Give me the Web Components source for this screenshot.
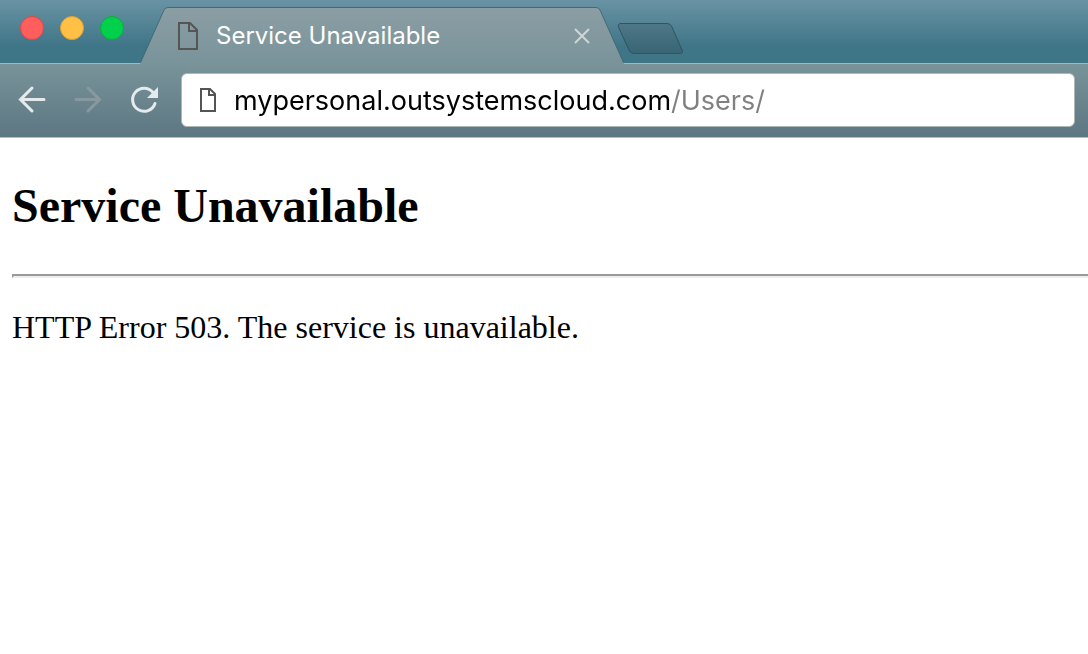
<!DOCTYPE html>
<html lang="en">
<head>
<meta charset="utf-8">
<title>Service Unavailable</title>
<style>
  html, body { margin: 0; min-height: 100%; background: #fff; }
  body { font-family: Inter, Roboto, sans-serif; overflow-x: hidden; }
</style>
</head>
<body>
<browser-window>
  <tab-strip slot="tabs">
    <window-controls slot="controls"></window-controls>
    <browser-tab>Service Unavailable</browser-tab>
    <new-tab-button></new-tab-button>
  </tab-strip>
  <nav-toolbar slot="toolbar">
    <address-bar url="mypersonal.outsystemscloud.com/Users/"></address-bar>
  </nav-toolbar>
  <error-page>
    <span slot="title">Service Unavailable</span>
    HTTP Error 503. The service is unavailable.
  </error-page>
</browser-window>

<script>
const define = (name, html) => customElements.define(name, class extends HTMLElement {
  constructor() {
    super();
    this.attachShadow({ mode: "open" }).innerHTML = html;
  }
});

define("browser-window", `
  <style>:host { display: flex; flex-direction: column; }</style>
  <slot name="tabs"></slot>
  <slot name="toolbar"></slot>
  <slot></slot>
`);

define("tab-strip", `
  <style>
    :host {
      display: flex; align-items: flex-end; height: 63px;
      background: linear-gradient(#6993a4, #3e7587 75%);
      border-bottom: 1px solid #a3b9c1;
    }
    .controls { align-self: flex-start; width: 140px; flex: none; }
  </style>
  <div class="controls"><slot name="controls"></slot></div>
  <slot></slot>
`);

define("window-controls", `
  <style>
    :host { display: flex; gap: 16px; padding: 16px 0 16px 20px; }
    button {
      box-sizing: border-box; flex: none; width: 24px; height: 24px; padding: 0;
      border: 1px solid; border-radius: 50%;
    }
    .close { background: #ff5f5c; border-color: #e14645; }
    .min { background: #ffc045; border-color: #dea034; }
    .max { background: #00d04c; border-color: #0faa3a; }
  </style>
  <button class="close" aria-label="Close"></button>
  <button class="min" aria-label="Minimize"></button>
  <button class="max" aria-label="Zoom"></button>
`);

define("browser-tab", `
  <style>
    :host { display: flex; flex: 0 1 484px; height: 57px; margin-bottom: -1px; position: relative; }
    .edge { flex: none; width: 28px; height: 57px; }
    .body {
      box-sizing: border-box; flex: 1; min-width: 0; display: flex; align-items: center;
      border-top: 1px solid #456a75;
      background: linear-gradient(#8b9ea4, #79939a);
      padding: 0 2px 0 8px;
    }
    .page { flex: none; margin-right: 16px; }
    .title { flex: 1; font-size: 24px; line-height: 32px; color: #fff; white-space: nowrap; overflow: hidden; }
    button { width: 24px; height: 24px; padding: 0; border: 0; background: none; display: grid; place-items: center; }
  </style>
  <svg class="edge" viewBox="0 0 28 57" aria-hidden="true">
    <defs><linearGradient id="l" x2="0" y2="1"><stop stop-color="#8b9ea4"/><stop offset="1" stop-color="#79939a"/></linearGradient></defs>
    <path d="M0 57 L1 55 L24 3 Q25 .5 28 .5 V57Z" fill="url(#l)"/>
    <path d="M.5 55.5 L24 3 Q25 .5 28 .5" fill="none" stroke="#456a75"/>
  </svg>
  <div class="body">
    <svg class="page" width="24" height="28" viewBox="0 0 24 28" fill="none" stroke="#555" stroke-width="2" aria-hidden="true">
      <path d="M3 1H14L21 8V27H3Z"/><path d="M13 1V9H21"/>
    </svg>
    <span class="title"><slot></slot></span>
    <button aria-label="Close tab"><svg width="16" height="16" viewBox="0 0 16 16" stroke="#d0d5d6" stroke-width="2"><path d="M1 1L15 15M15 1L1 15"/></svg></button>
  </div>
  <svg class="edge" viewBox="0 0 28 57" aria-hidden="true">
    <defs><linearGradient id="r" x2="0" y2="1"><stop stop-color="#8b9ea4"/><stop offset="1" stop-color="#79939a"/></linearGradient></defs>
    <path d="M28 57 L27 55 L4 3 Q3 .5 0 .5 V57Z" fill="url(#r)"/>
    <path d="M27.5 55.5 L4 3 Q3 .5 0 .5" fill="none" stroke="#456a75"/>
  </svg>
`);

define("new-tab-button", `
  <style>
    :host { display: block; margin: 0 0 8px -7px; position: relative; }
    button { display: block; padding: 0; border: 0; background: none; }
    svg { display: block; }
  </style>
  <button aria-label="New tab">
    <svg width="67" height="32" viewBox="0 0 67 32">
      <defs><linearGradient id="n" x2="0" y2="1"><stop stop-color="#4f7887"/><stop offset="1" stop-color="#386473"/></linearGradient></defs>
      <path d="M4 .5H50Q53 .5 54.500 3L65 27Q66.500 30.500 63.500 30.500H17Q13.500 30.500 12 27L1.500 4Q.5 .5 4 .5Z" fill="url(#n)" stroke="#2d5461"/>
    </svg>
  </button>
`);

define("nav-toolbar", `
  <style>
    :host {
      box-sizing: border-box; display: flex; align-items: center; height: 74px;
      padding: 0 13px 2px 16px;
      background: linear-gradient(#79939a, #5c7782);
      border-bottom: 1px solid #b4c0c4;
    }
    nav { display: flex; gap: 24px; margin-right: 21px; }
    button { width: 32px; height: 32px; padding: 0; border: 0; background: none; color: #e6eaeb; }
    button:disabled { color: #87999f; }
    svg { display: block; fill: none; stroke: currentColor; stroke-width: 3; stroke-linecap: round; }
    slot { display: block; flex: 1; }
  </style>
  <nav aria-label="Navigation">
    <button aria-label="Back"><svg width="32" height="32" viewBox="0 0 32 32"><path d="M28 15.500H4.500M16 4L4.500 15.500L16 27"/></svg></button>
    <button aria-label="Forward" disabled><svg width="32" height="32" viewBox="0 0 32 32"><path d="M4 15.500H27.500M16 4L27.500 15.500L16 27"/></svg></button>
    <button aria-label="Reload"><svg width="32" height="32" viewBox="0 0 32 32"><path d="M25 8.500A11.500 11.500 0 1 0 27 19.500"/><path d="M30 3V14H19Z" fill="currentColor" stroke="none"/></svg></button>
  </nav>
  <slot></slot>
`);

customElements.define("address-bar", class extends HTMLElement {
  constructor() {
    super();
    this.attachShadow({ mode: "open" }).innerHTML = `
      <style>
        :host {
          box-sizing: border-box; display: flex; align-items: center; height: 54px;
          padding: 0 16px; background: #fff; border: 1px solid #b0b5b6; border-radius: 6px;
        }
        svg { flex: none; margin-right: 16px; }
        input {
          flex: 1; min-width: 0; height: 40px; padding: 2px 0 0; border: 0; outline: 0;
          font-family: inherit; font-size: 27px;
          color: #000; -webkit-text-fill-color: transparent;
          background: linear-gradient(90deg, #000 var(--host-width), #808080 var(--host-width));
          -webkit-background-clip: text; background-clip: text;
        }
      </style>
      <svg width="20" height="24" viewBox="0 0 20 24" fill="none" stroke="#555" stroke-width="2" aria-hidden="true">
        <path d="M3 1H12L17 6V23H3Z"/><path d="M11 1V7H17"/>
      </svg>
      <input type="text" aria-label="Address" spellcheck="false">`;
  }
  connectedCallback() {
    const input = this.shadowRoot.querySelector("input");
    const url = this.getAttribute("url");
    input.value = url;
    // The path is drawn lighter than the host, starting where the host text ends.
    const ctx = document.createElement("canvas").getContext("2d");
    const style = getComputedStyle(input);
    ctx.font = style.fontWeight + " " + style.fontSize + " " + style.fontFamily;
    const width = Math.round(ctx.measureText(url.slice(0, url.indexOf("/"))).width);
    input.style.setProperty("--host-width", width + "px");
  }
});

define("error-page", `
  <style>
    :host {
      display: block; padding: 40px 0 40px 12px; color: #000;
      font-family: "Liberation Serif", "Times New Roman", serif; font-size: 32px; line-height: 34px;
    }
    h1 { margin: 0; font-size: 48px; line-height: 56px; }
    hr { margin: 40px -4px 32px 0; border: 2px solid; border-color: #9a9a9a #eee #eee #9a9a9a; }
    p { margin: 0; }
  </style>
  <h1><slot name="title"></slot></h1>
  <hr>
  <p><slot></slot></p>
`);
</script>
</body>
</html>
